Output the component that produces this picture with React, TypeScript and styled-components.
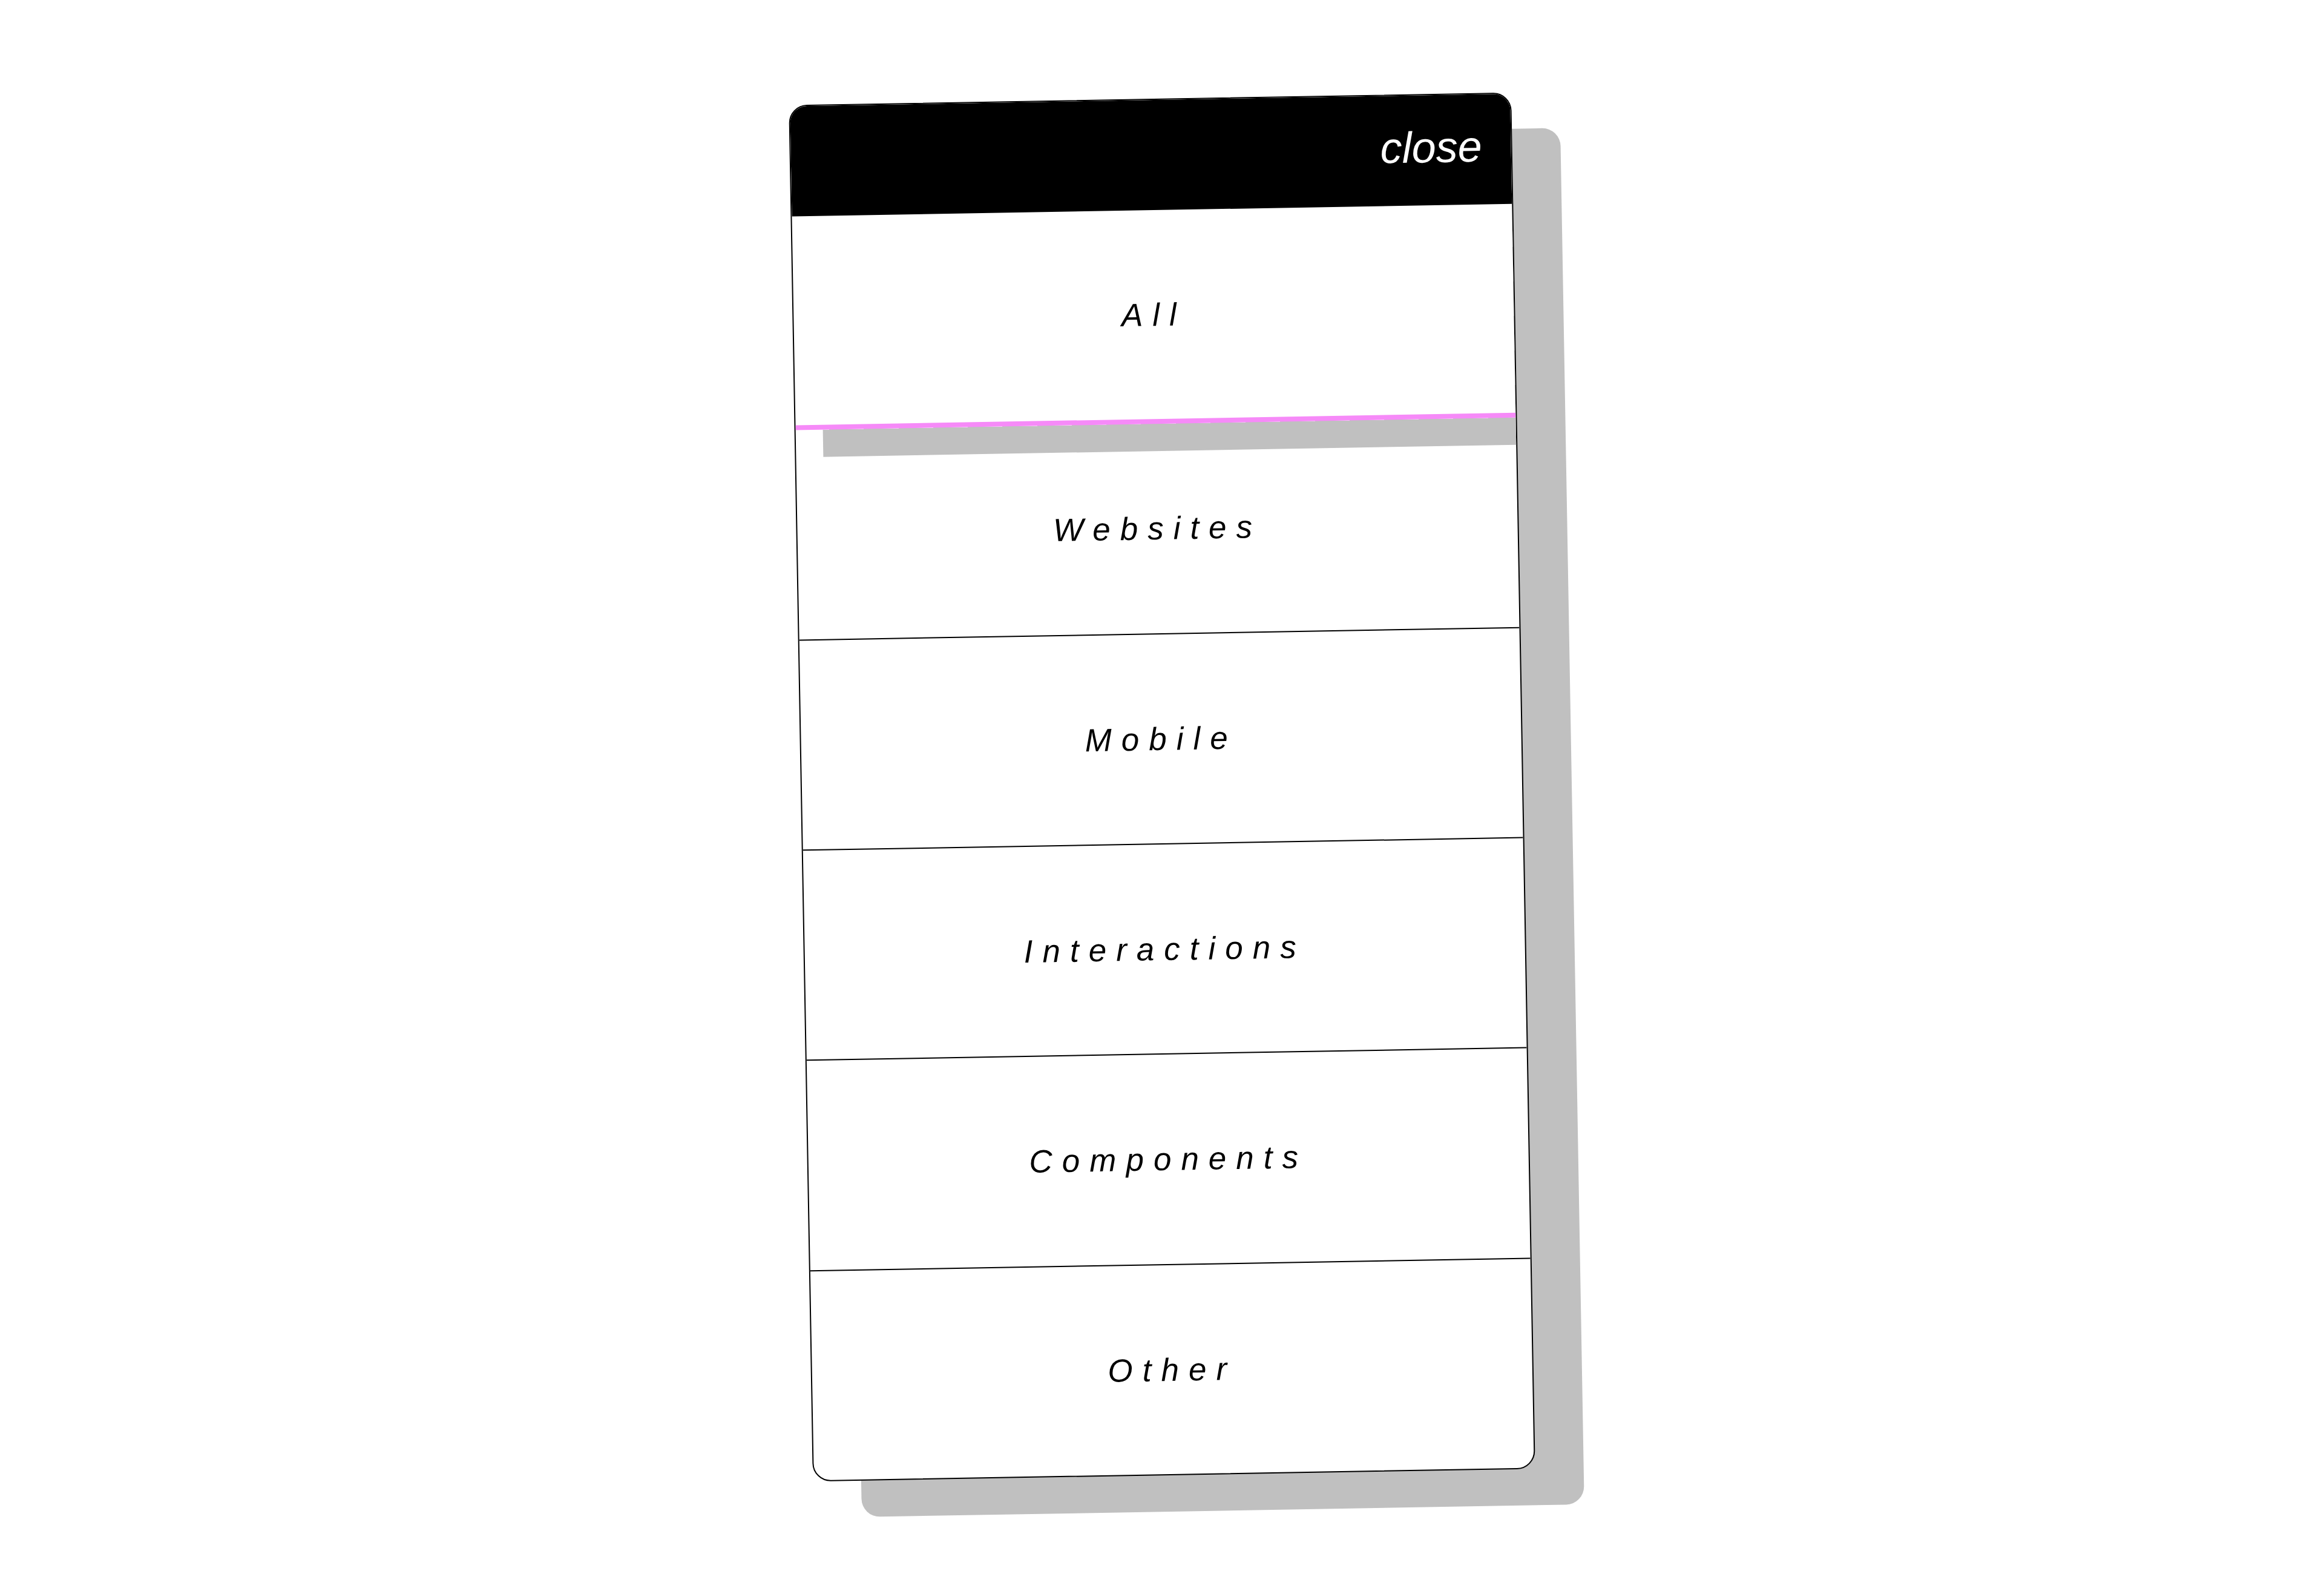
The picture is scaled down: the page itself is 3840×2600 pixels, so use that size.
import React from "react";
import styled, { createGlobalStyle } from "styled-components";

const GlobalStyle = createGlobalStyle`
  html, body {
    margin: 0;
    padding: 0;
    background: #ffffff;
  }
  * { box-sizing: border-box; }
`;

const Page = styled.div`
  width: 100%;
  height: 2600px;
  display: flex;
  align-items: center;
  justify-content: center;
  font-family: "Liberation Sans", Arial, sans-serif;
`;

const Menu = styled.nav`
  width: 1194px;
  height: 2274px;
  display: flex;
  flex-direction: column;
  background: #ffffff;
  border: 2px solid #000000;
  border-radius: 30px;
  overflow: hidden;
  box-shadow: 80px 60px 0 #c0c0c0;
  transform: rotate(-1deg);
`;

const Header = styled.header`
  flex: 0 0 182px;
  display: flex;
  align-items: center;
  justify-content: flex-end;
  padding: 0 48px 10px 0;
  background: #000000;
`;

const Close = styled.button`
  border: 0;
  background: transparent;
  padding: 0;
  color: #ffffff;
  font-family: "Liberation Sans", Arial, sans-serif;
  font-style: italic;
  font-size: 72px;
  line-height: 1;
  cursor: pointer;
`;

const Item = styled.a<{ $active?: boolean }>`
  flex: 1 1 0;
  display: flex;
  align-items: center;
  justify-content: center;
  color: #000000;
  text-decoration: none;
  font-style: italic;
  font-size: 53px;
  letter-spacing: 16px;
  border-bottom: ${(p) => (p.$active ? "8px solid #f68af8" : "2px solid #000000")};
  box-shadow: ${(p) => (p.$active ? "45px 45px 0 #c0c0c0" : "none")};

  &:last-child {
    border-bottom: 0;
  }
`;

const items = ["All", "Websites", "Mobile", "Interactions", "Components", "Other"];

export default function App() {
  return (
    <>
      <GlobalStyle />
      <Page>
        <Menu>
          <Header>
            <Close>close</Close>
          </Header>
          {items.map((label, i) => (
            <Item key={label} href="#" $active={i === 0}>
              {label}
            </Item>
          ))}
        </Menu>
      </Page>
    </>
  );
}
